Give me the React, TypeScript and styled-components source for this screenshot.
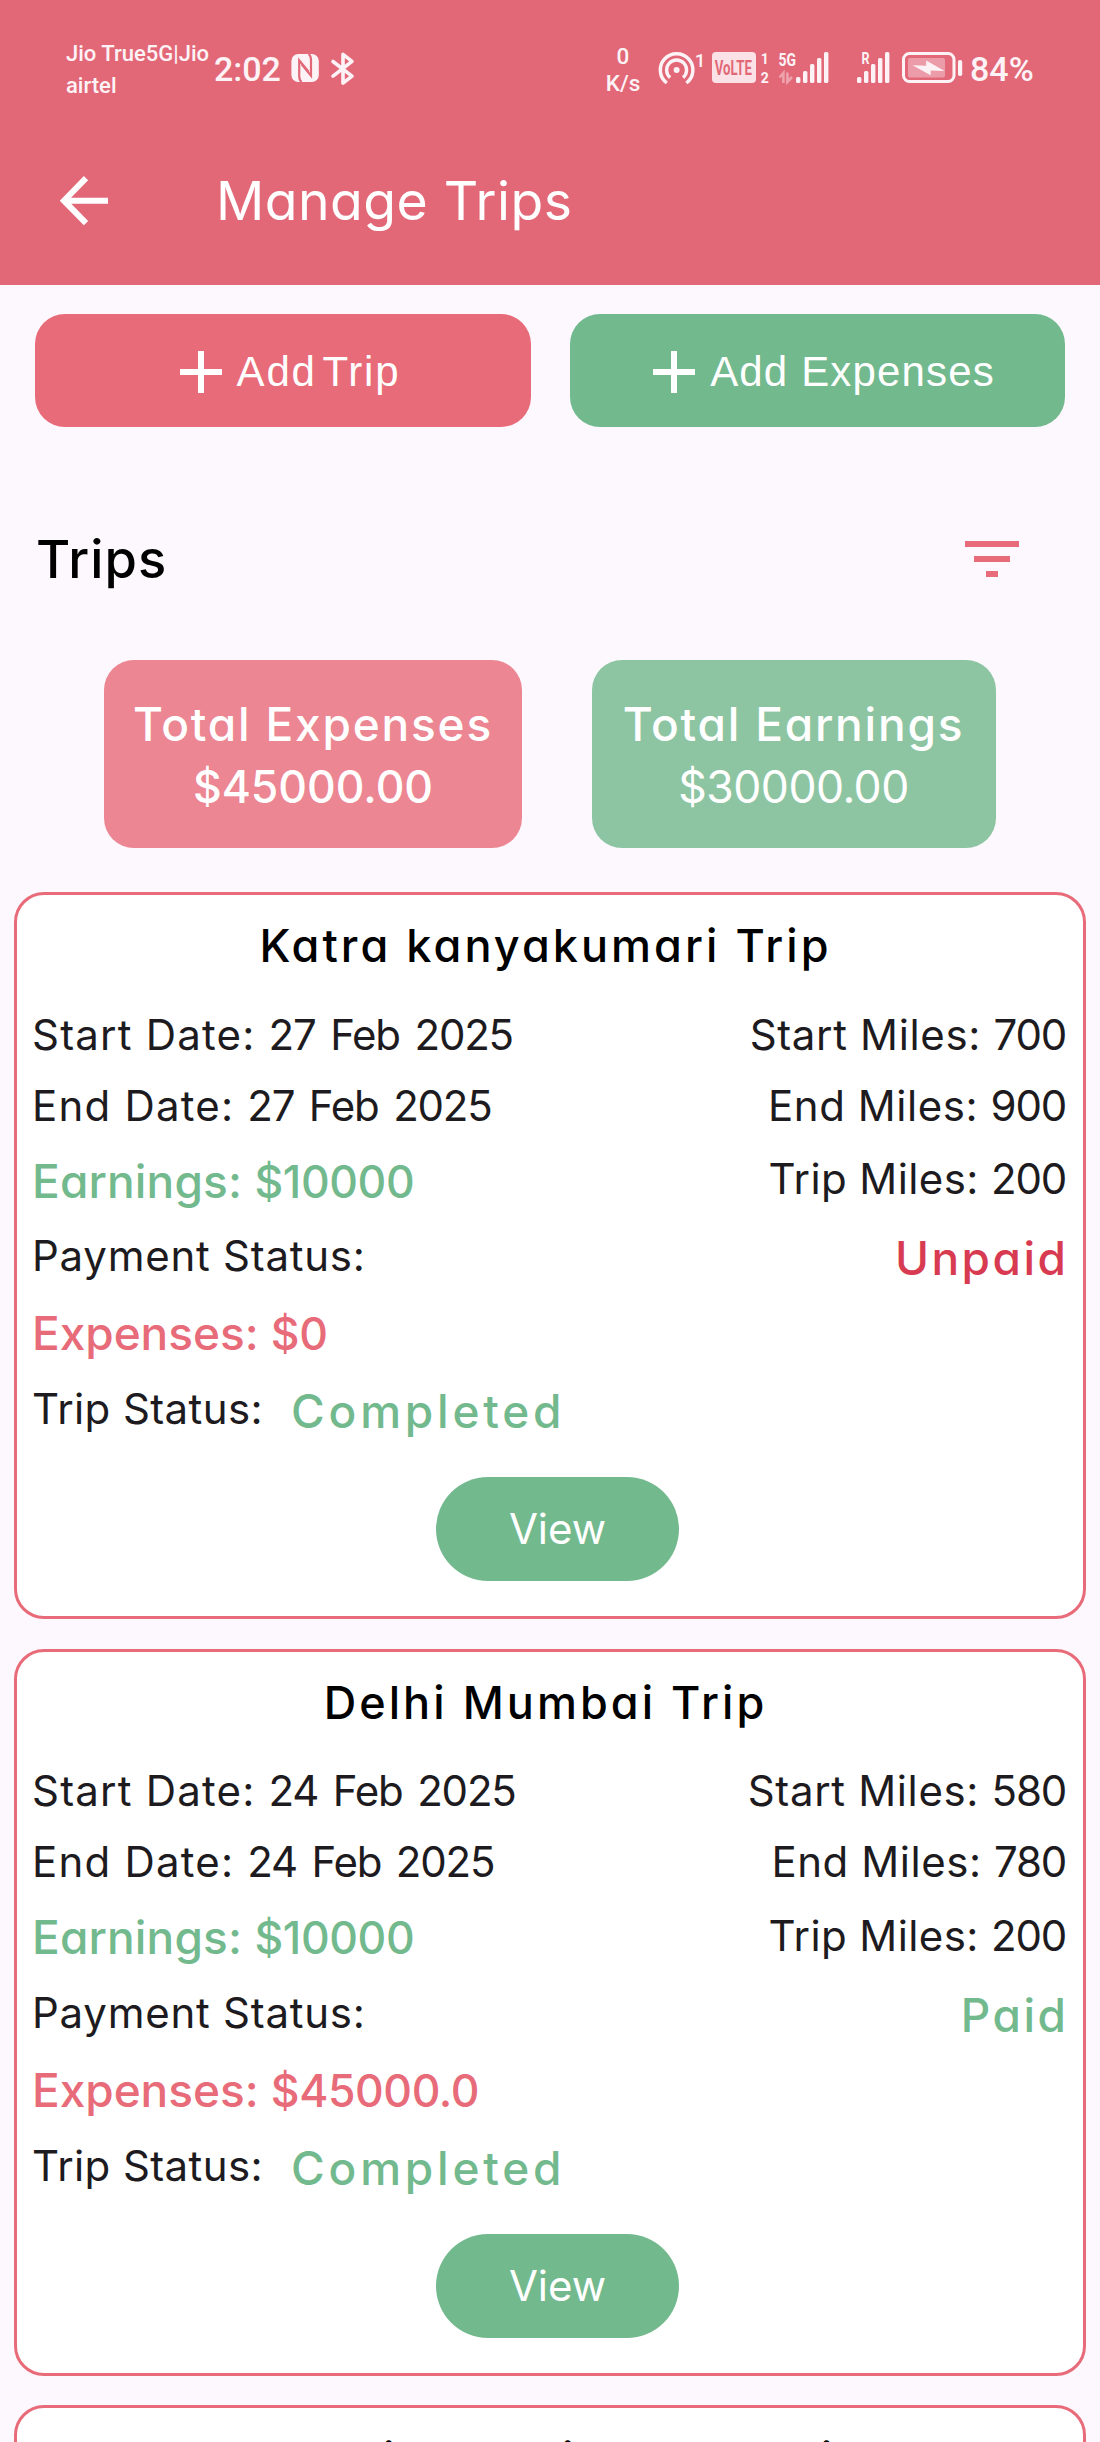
import React from "react";
import styled, { createGlobalStyle } from "styled-components";

const color = {
  header: "#e26878",
  page: "#fdf8fe",
  pink: "#e86b79",
  pinkSoft: "#eb8692",
  green: "#73b98e",
  greenSoft: "#8dc5a3",
  crimson: "#d73a51",
  ink: "#1d1b20",
};

const GlobalStyle = createGlobalStyle`
  *, *::before, *::after { box-sizing: border-box; }
  body { margin: 0; background: ${color.page}; }
`;

const Screen = styled.div`
  width: 1100px;
  height: 2442px;
  overflow: hidden;
  background: ${color.page};
  font-family: Inter, sans-serif;
  white-space: nowrap;
`;

/* ---------- header ---------- */

const Header = styled.header`
  height: 285px;
  background: ${color.header};
  color: #fff;
`;

const StatusBar = styled.div`
  display: flex;
  align-items: center;
  justify-content: space-between;
  height: 138px;
  padding: 0 60px 0 66px;
  font-family: Roboto, sans-serif;
  color: #fdf3f6;
`;

const StatusGroup = styled.div`
  display: flex;
  align-items: center;
`;

const Carrier = styled.div`
  width: 148px;
  padding-top: 1px;
  font-size: 22px;
  font-weight: 500;
  line-height: 32px;
`;

const Speed = styled.div`
  width: 40px;
  margin-right: 15px;
  padding-top: 1px;
  font-size: 22.5px;
  font-weight: 500;
  line-height: 27px;
  text-align: center;
`;

const StatusText = styled.span<{ $width: number; $gap?: number }>`
  width: ${(p) => p.$width}px;
  margin-left: ${(p) => p.$gap ?? 0}px;
  font-size: 34px;
  font-weight: 500;
  line-height: 40px;
`;

const StatusIcon = styled.svg<{ $gap?: number }>`
  display: block;
  flex: none;
  overflow: visible;
  margin-left: ${(p) => p.$gap ?? 0}px;
  font-family: Roboto, sans-serif;
`;

const AppBar = styled.div`
  display: flex;
  align-items: center;
  height: 125px;
  padding-left: 60px;
`;

const ScreenTitle = styled.h1`
  margin: 0 0 0 108px;
  font-size: 53.5px;
  font-weight: 400;
  line-height: 70px;
  letter-spacing: 0.45px;
  font-feature-settings: "cv11";
`;

/* ---------- actions ---------- */

const Actions = styled.div`
  display: flex;
  gap: 39px;
  padding: 29px 35px 0;
`;

const ActionButton = styled.button<{ $bg: string; $wordSpacing?: number; $spacing: number; $shift: number }>`
  display: flex;
  flex: 1;
  align-items: center;
  justify-content: center;
  gap: 15px;
  height: 113px;
  padding: 3px 0 0 ${(p) => p.$shift}px;
  border: 0;
  border-radius: 30px;
  background: ${(p) => p.$bg};
  color: #fff;
  font-family: "Liberation Sans", Arial, sans-serif;
  font-size: 42px;
  letter-spacing: ${(p) => p.$spacing}px;
  word-spacing: ${(p) => p.$wordSpacing ?? 0}px;
`;

const SectionHead = styled.div`
  display: flex;
  align-items: center;
  justify-content: space-between;
  height: 64px;
  margin: 100px 81px 69px 36px;
`;

const SectionTitle = styled.h2`
  margin: 0;
  color: #000;
  font-size: 52.5px;
  font-weight: 500;
  line-height: 64px;
  letter-spacing: 1px;
  font-feature-settings: "cv11";
`;

/* ---------- totals ---------- */

const Totals = styled.div`
  display: flex;
  gap: 69.5px;
  margin: 0 0 44px 104px;
`;

const TotalCard = styled.div<{ $bg: string; $width: number }>`
  width: ${(p) => p.$width}px;
  height: 188px;
  padding-top: 33px;
  border-radius: 30px;
  background: ${(p) => p.$bg};
  color: #fff;
  text-align: center;
  line-height: 62.5px;
  font-feature-settings: "cv11";
`;

const TotalLabel = styled.div`
  font-size: 46px;
  font-weight: 500;
  letter-spacing: 1.8px;
`;

const TotalValue = styled.div<{ $weight: number; $spacing?: number }>`
  font-size: 44.5px;
  font-weight: ${(p) => p.$weight};
  letter-spacing: ${(p) => p.$spacing ?? 0}px;
`;

/* ---------- trips ---------- */

const TripList = styled.div`
  display: flex;
  flex-direction: column;
  gap: 29.5px;
  padding: 0 14px;
`;

const TripCard = styled.article`
  height: 727px;
  border: 3px solid ${color.pink};
  border-radius: 30px;
  padding: 0 17px 0 15px;
  background: #fff;
`;

const TripTitle = styled.h3`
  margin: 0 7px 5px 0;
  color: #000;
  font-size: 45px;
  font-weight: 500;
  line-height: 101px;
  letter-spacing: 3.05px;
  text-align: center;
  font-feature-settings: "cv11";
`;

const Row = styled.div<{ $height: number }>`
  display: flex;
  align-items: center;
  justify-content: space-between;
  height: ${(p) => p.$height}px;
`;

const Label = styled.span<{ $spacing?: number }>`
  padding-bottom: 4px;
  color: ${color.ink};
  font-size: 42px;
  line-height: 60px;
  letter-spacing: ${(p) => p.$spacing ?? 0.4}px;
`;

const Value = styled.span`
  letter-spacing: -1.2px;
  word-spacing: 4px;
`;

const Money = styled.span<{ $color: string; $spacing: number }>`
  color: ${(p) => p.$color};
  font-size: 46px;
  font-weight: 500;
  line-height: 60px;
  letter-spacing: ${(p) => p.$spacing}px;
  font-feature-settings: "cv11";
`;

const Amount = styled.span`
  font-size: 44.5px;
  letter-spacing: -0.4px;
`;

const Status = styled.span<{ $color: string; $spacing: number }>`
  margin-right: -${(p) => p.$spacing}px;
  color: ${(p) => p.$color};
  font-size: 46px;
  font-weight: 500;
  line-height: 60px;
  letter-spacing: ${(p) => p.$spacing}px;
  font-feature-settings: "cv11";
`;

const Inline = styled.div`
  display: flex;
  align-items: center;
  gap: 28px;
`;

const ViewButton = styled.button`
  display: block;
  width: 243px;
  height: 104px;
  margin: 25px 0 0 404px;
  padding: 0;
  border: 0;
  border-radius: 52px;
  background: ${color.green};
  color: #fff;
  font-family: inherit;
  font-size: 42px;
  line-height: 104px;
`;

/* ---------- icons ---------- */

const NfcIcon = () => (
  <StatusIcon width="28" height="42" viewBox="0 -3 28 42">
    <rect x="0.4" y="3" width="27.4" height="28" rx="7" fill="#fdf3f6" />
    <path
      d="M10.5 31C8.4 29.2 8.2 27.4 8.2 25V9.2L17.6 20.6M17.6 3C19.8 4.8 20 6.6 20 9V24.8L10.6 13.4"
      fill="none"
      stroke={color.header}
      strokeWidth="2.2"
    />
  </StatusIcon>
);

const BluetoothIcon = () => (
  <StatusIcon width="26" height="42" viewBox="0 -3 26 42" $gap={11}>
    <path
      d="M3 10.5L22 25.2L13 32.2V3.4L22 10.4L3 25.2"
      fill="none"
      stroke="#fdf3f6"
      strokeWidth="3.6"
      strokeLinejoin="round"
      strokeLinecap="round"
    />
  </StatusIcon>
);

const HotspotIcon = () => (
  <StatusIcon width="48" height="42" viewBox="0 -3 48 42" fill="none" stroke="#fdf3f6" strokeWidth="3.4">
    <circle cx="18.6" cy="19" r="3" fill="#fdf3f6" stroke="none" />
    <path d="M12.1 26.6A10 10 0 1 1 25.1 26.6" />
    <path d="M8.8 32A16.3 16.3 0 1 1 28.4 32" />
    <text x="36.8" y="16" fontSize="19" fontWeight="500" fill="#fdf3f6" stroke="none">
      1
    </text>
  </StatusIcon>
);

const VolteIcon = () => (
  <StatusIcon width="60" height="42" viewBox="0 -3 60 42" $gap={6} fill="#fdf3f6" fontWeight="700">
    <rect x="0" y="1" width="44" height="31" rx="4" opacity="0.88" />
    <text transform="translate(2.8 23.5) scale(0.66 1)" fontSize="20" fill={color.header}>
      VoLTE
    </text>
    <text x="48.8" y="13" fontSize="14">
      1
    </text>
    <text x="48.8" y="31.5" fontSize="14">
      2
    </text>
  </StatusIcon>
);

const bars = [
  [0, 26, 6],
  [7, 20, 12],
  [14, 13, 19],
  [21, 7, 25],
  [28, 1, 31],
];

const Signal = ({ x }: { x: number }) => (
  <>
    {bars.map(([dx, y, h]) => (
      <rect key={dx} x={x + dx} y={y} width="4.4" height={h} rx="1.5" />
    ))}
  </>
);

const Signal5gIcon = () => (
  <StatusIcon width="52" height="42" viewBox="0 -3 52 42" $gap={6} fill="#fdf3f6" fontWeight="700">
    <text x="0.5" y="14.5" fontSize="18" textLength="17.5" lengthAdjust="spacingAndGlyphs">
      5G
    </text>
    <path d="M1.5 26.5L5.4 22V32M9.4 21.4V31L14 26" stroke="#fdf3f6" strokeWidth="2.6" fill="none" opacity="0.42" />
    <Signal x={18} />
  </StatusIcon>
);

const SignalRoamingIcon = () => (
  <StatusIcon width="34" height="42" viewBox="0 -3 34 42" $gap={27} fill="#fdf3f6" fontWeight="700">
    <text x="4.5" y="13" fontSize="16" textLength="8" lengthAdjust="spacingAndGlyphs">
      R
    </text>
    <Signal x={0} />
  </StatusIcon>
);

const BatteryIcon = () => (
  <StatusIcon width="62" height="42" viewBox="0 -3 62 42" $gap={11} fill="#fdf3f6">
    <rect x="1.5" y="2.5" width="50.5" height="28" rx="6" fill="none" stroke="#fdf3f6" strokeWidth="3" />
    <rect x="6" y="7" width="37" height="19.5" rx="2" opacity="0.38" />
    <path d="M10.5 14.2L24.2 14.8V9.6L42.5 20L28.7 19.4V24.2Z" />
    <rect x="56" y="9" width="4.2" height="16" rx="1.8" />
  </StatusIcon>
);

const BackIcon = () => (
  <svg width="48" height="50" viewBox="0 0 48 50" fill="none" stroke="#fff" strokeWidth="6">
    <path d="M48 24.7H4M26 2.2L4 24.7L26 47.2" />
  </svg>
);

const PlusIcon = () => (
  <svg width="42" height="42" viewBox="0 0 42 42" stroke="#fff" strokeWidth="6">
    <path d="M21 0V42M0 21H42" />
  </svg>
);

const FilterIcon = () => (
  <svg width="54" height="36" viewBox="0 0 54 36" fill={color.pink}>
    <rect x="0" y="0" width="54" height="6" />
    <rect x="9" y="15" width="36" height="6" />
    <rect x="21" y="30" width="12" height="6" />
  </svg>
);

/* ---------- data ---------- */

interface TripDetails {
  start: string;
  end: string;
  startMiles: number;
  endMiles: number;
  earnings: string;
  paid: boolean;
  expenses: string;
}

interface Trip {
  name: string;
  details?: TripDetails;
}

const trips: Trip[] = [
  {
    name: "Katra kanyakumari Trip",
    details: {
      start: "27 Feb 2025",
      end: "27 Feb 2025",
      startMiles: 700,
      endMiles: 900,
      earnings: "$10000",
      paid: false,
      expenses: "$0",
    },
  },
  {
    name: "Delhi Mumbai Trip",
    details: {
      start: "24 Feb 2025",
      end: "24 Feb 2025",
      startMiles: 580,
      endMiles: 780,
      earnings: "$10000",
      paid: true,
      expenses: "$45000.0",
    },
  },
  { name: "Chandigarh Himachal Trip" },
];

const Details = ({ trip }: { trip: TripDetails }) => (
  <>
    <Row $height={71}>
      <Label $spacing={1.2}>
        Start Date: <Value>{trip.start}</Value>
      </Label>
      <Label $spacing={0.65}>
        Start Miles: <Value>{trip.startMiles}</Value>
      </Label>
    </Row>
    <Row $height={71}>
      <Label $spacing={1.2}>
        End Date: <Value>{trip.end}</Value>
      </Label>
      <Label $spacing={0.55}>
        End Miles: <Value>{trip.endMiles}</Value>
      </Label>
    </Row>
    <Row $height={76}>
      <Money $color={color.green} $spacing={0.15}>
        Earnings: <Amount>{trip.earnings}</Amount>
      </Money>
      <Label $spacing={0.4}>
        Trip Miles: <Value>{trip.endMiles - trip.startMiles}</Value>
      </Label>
    </Row>
    <Row $height={78}>
      <Label $spacing={0.75}>Payment Status:</Label>
      <Status $color={trip.paid ? color.green : color.crimson} $spacing={2.5}>
        {trip.paid ? "Paid" : "Unpaid"}
      </Status>
    </Row>
    <Row $height={73}>
      <Money $color={color.pink} $spacing={-0.05}>
        Expenses: <Amount>{trip.expenses}</Amount>
      </Money>
    </Row>
    <Row $height={82}>
      <Inline>
        <Label>Trip Status:</Label>
        <Status $color={color.green} $spacing={3.8}>
          Completed
        </Status>
      </Inline>
    </Row>
    <ViewButton>View</ViewButton>
  </>
);

export default function App() {
  return (
    <Screen>
      <GlobalStyle />
      <Header>
        <StatusBar>
          <StatusGroup>
            <Carrier>
              Jio True5G|Jio
              <br />
              airtel
            </Carrier>
            <StatusText $width={77}>2:02</StatusText>
            <NfcIcon />
            <BluetoothIcon />
          </StatusGroup>
          <StatusGroup>
            <Speed>
              0<br />
              K/s
            </Speed>
            <HotspotIcon />
            <VolteIcon />
            <Signal5gIcon />
            <SignalRoamingIcon />
            <BatteryIcon />
            <StatusText $width={70} $gap={6}>
              84%
            </StatusText>
          </StatusGroup>
        </StatusBar>
        <AppBar>
          <BackIcon />
          <ScreenTitle>Manage Trips</ScreenTitle>
        </AppBar>
      </Header>

      <Actions>
        <ActionButton $bg={color.pink} $spacing={1.8} $wordSpacing={-7} $shift={14}>
          <PlusIcon />
          Add Trip
        </ActionButton>
        <ActionButton $bg={color.green} $spacing={1.15} $shift={13}>
          <PlusIcon />
          Add Expenses
        </ActionButton>
      </Actions>

      <SectionHead>
        <SectionTitle>Trips</SectionTitle>
        <FilterIcon />
      </SectionHead>

      <Totals>
        <TotalCard $bg={color.pinkSoft} $width={418}>
          <TotalLabel>Total Expenses</TotalLabel>
          <TotalValue $weight={500}>$45000.00</TotalValue>
        </TotalCard>
        <TotalCard $bg={color.greenSoft} $width={404}>
          <TotalLabel>Total Earnings</TotalLabel>
          <TotalValue $weight={400} $spacing={-0.5}>
            $30000.00
          </TotalValue>
        </TotalCard>
      </Totals>

      <TripList>
        {trips.map((trip) => (
          <TripCard key={trip.name}>
            <TripTitle>{trip.name}</TripTitle>
            {trip.details && <Details trip={trip.details} />}
          </TripCard>
        ))}
      </TripList>
    </Screen>
  );
}
